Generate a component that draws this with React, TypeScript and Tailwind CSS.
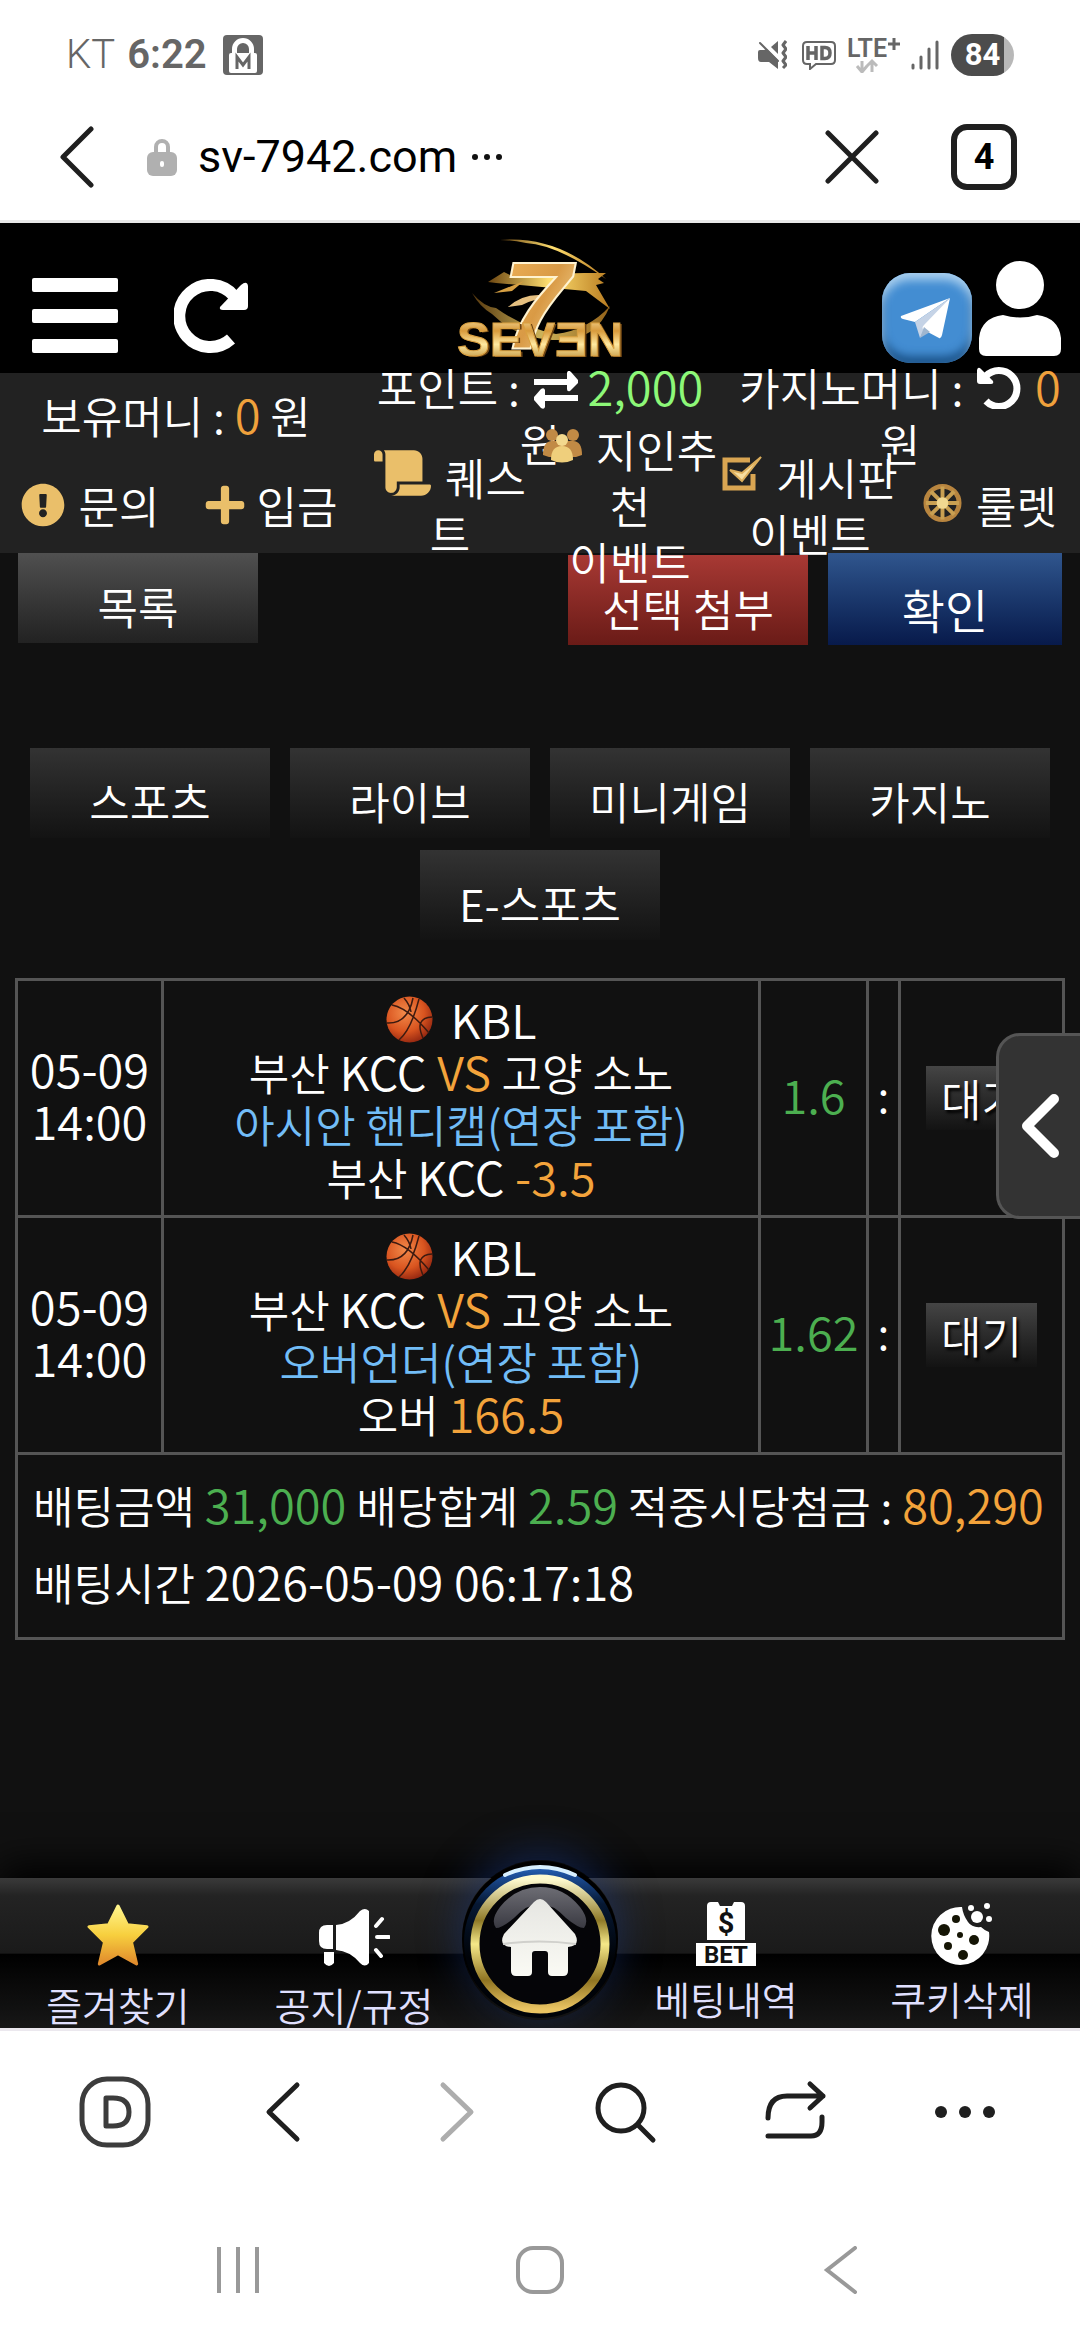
import type { ReactNode } from "react";
import { FaExclamationCircle, FaPlus, FaScroll } from "react-icons/fa";

const StatusBar = () => (
  <div className="flex h-[90px] items-end justify-between px-[66px] pb-[14px] text-[#666]">
    <div className="flex h-[42px] items-center">
      <span className="text-[40px] font-light">KT</span>
      <span className="ml-3 text-[40px] font-semibold">6:22</span>
      <svg className="ml-4" width="40" height="40" viewBox="0 0 40 40">
        <rect width="40" height="40" rx="4" fill="#666" />
        <path d="M11.500 20V14a8.500 8.500 0 0 1 17 0V20" fill="none" stroke="#fff" strokeWidth="5" />
        <rect x="6" y="18" width="28" height="20" rx="2" fill="#fff" />
        <path d="M14 34V22l6 8 6-8v12" fill="none" stroke="#666" strokeWidth="3" />
      </svg>
    </div>
    <div className="flex h-[42px] items-center">
      <svg width="30" height="30" viewBox="0 0 30 30" fill="none" stroke="#666">
        <path d="M1 12q0-2 2-2h4l3-1 11 11v9l-9-7H4q-3 0-3-4z" fill="#666" stroke="none" />
        <path d="M21 1v13l-7-7z" fill="#666" stroke="none" />
        <path d="M3 3l18 18" strokeWidth="2" strokeLinecap="round" />
        <path d="M29 1l-3 4 3 4-3 4 3 4-3 4 3 4-3 3" strokeWidth="3" strokeLinejoin="round" />
      </svg>
      <svg className="ml-[14px]" width="36" height="30" viewBox="0 0 36 30" fill="none" stroke="#666">
        <path d="M6 2h24q4 0 4 4v14q0 4-4 4H15l-6 5v-5H6q-4 0-4-4V6q0-4 4-4z" strokeWidth="2" />
        <path d="M7 6v14M15 6v14M7 13h8M21 7.500v11h3q5 0 5-5.500t-5-5.500z" strokeWidth="3.500" />
      </svg>
      <svg className="ml-[10px]" width="54" height="36" viewBox="0 0 54 36">
        <path d="M10 29l5 6 5-6M15 34V24M20 29l5-5 5 5M25 24v11" fill="none" stroke="#bbb" strokeWidth="3" />
        <text x="0" y="20" fontSize="25" fontWeight="600" fill="#666">LTE</text>
        <path d="M41 7h12M47 1v12" stroke="#666" strokeWidth="3" />
      </svg>
      <svg className="ml-[10px]" width="28" height="30" viewBox="0 0 28 30" stroke="#666" strokeWidth="3" strokeLinecap="round">
        <path d="M2 25v3M10 17v11M18 9v19M26 2v26" />
      </svg>
      <div className="ml-3 flex h-[42px] w-[63px] items-center justify-center rounded-full bg-linear-to-r from-[#4c4c4c] from-84% to-[#b8b8b8] to-84% text-[31px] font-bold text-white">
        84
      </div>
    </div>
  </div>
);

const AddressBar = () => (
  <div className="flex h-[133px] items-center border-b-3 border-[#e8e8e8] pt-[3px] pl-[58px] pr-[63px]">
    <button aria-label="뒤로">
      <svg width="36" height="64" viewBox="0 0 36 64" fill="none" stroke="#1f1f1f" strokeWidth="5" strokeLinecap="round" strokeLinejoin="round">
        <path d="M33 4L5 32l28 28" />
      </svg>
    </button>
    <svg className="ml-[53px]" width="30" height="38" viewBox="0 0 30 38">
      <path d="M9 16V9a6 6 0 0 1 12 0v7" fill="none" stroke="#b0b0b0" strokeWidth="4" />
      <rect y="14" width="30" height="24" rx="6" fill="#b0b0b0" />
      <rect x="13" y="23" width="4" height="6" rx="2" fill="#fff" />
    </svg>
    <span className="ml-[21px] text-[45px] text-black">sv-7942.com</span>
    <svg className="ml-[15px]" width="30" height="8" viewBox="0 0 30 8" fill="#111">
      <circle cx="3" cy="4" r="3" />
      <circle cx="15" cy="4" r="3" />
      <circle cx="27" cy="4" r="3" />
    </svg>
    <button className="ml-auto" aria-label="중지">
      <svg width="54" height="56" viewBox="0 0 54 56" stroke="#1f1f1f" strokeWidth="5" strokeLinecap="round">
        <path d="M3 4l48 48M51 4L3 52" />
      </svg>
    </button>
    <button className="ml-[72px] flex size-[66px] items-center justify-center rounded-2xl border-6 border-[#1f1f1f] text-[36px] font-bold text-black">
      4
    </button>
  </div>
);

const Logo = () => (
  <svg width="172" height="124" viewBox="0 0 172 124" role="img" aria-label="SEVEN">
    <defs>
      <linearGradient id="gold" x1="0" y1="0" x2="0" y2="1">
        <stop offset="0" stopColor="#fff3c0" />
        <stop offset="0.35" stopColor="#d89a3c" />
        <stop offset="0.6" stopColor="#ffe9a0" />
        <stop offset="1" stopColor="#a8731a" />
      </linearGradient>
      <linearGradient id="seven" x1="0" y1="0" x2="1" y2="1">
        <stop offset="0" stopColor="#f0b45a" />
        <stop offset="0.5" stopColor="#d99a45" />
        <stop offset="1" stopColor="#fff0b8" />
      </linearGradient>
      <linearGradient id="sweep" x1="0" y1="0" x2="1" y2="0">
        <stop offset="0" stopColor="#6b4510" />
        <stop offset="0.5" stopColor="#ffdf70" />
        <stop offset="1" stopColor="#b87b20" />
      </linearGradient>
    </defs>
    <path d="M46 3Q104-2 152 42Q104 8 72 6Q58 3 46 3z" fill="url(#sweep)" />
    <path d="M34 45l16-10 6 3 74-2 22 0-8 6 6 4-8 2 14 24-24-18-66-6-24-2z" fill="url(#sweep)" />
    <path d="M40 56l30-12-12 10z" fill="#d6a043" />
    <path d="M54 70q20-18 48-9-20-1-34 7z" fill="#e6c080" />
    <path d="M18 56q12 14 24 15 28 20 60 26 32-4 54-28-14 34-50 34-42 0-68-26Q26 70 18 56z" fill="url(#sweep)" opacity="0.8" />
    <text x="48" y="112" fontFamily="Liberation Sans" fontSize="124" fontWeight="700" fontStyle="italic" fill="url(#seven)" stroke="#fff3d0" strokeWidth="2">7</text>
    <text x="5" y="120" fontFamily="Liberation Sans" fontSize="49" fontWeight="700" fill="#6b4212">SEVƎN</text>
    <text x="3" y="119" fontFamily="Liberation Sans" fontSize="49" fontWeight="700" fill="url(#gold)" stroke="#d9a040" strokeWidth="1">SEVƎN</text>
  </svg>
);

const SiteHeader = () => (
  <header className="flex h-[150px] items-end bg-black px-8 text-white">
    <div className="flex flex-1 items-end pb-[20px]">
      <button aria-label="메뉴" className="flex h-[75px] w-[86px] flex-col justify-between">
        <span className="h-[14px] w-full rounded-xs bg-white" />
        <span className="h-[14px] w-full rounded-xs bg-white" />
        <span className="h-[14px] w-full rounded-xs bg-white" />
      </button>
      <button aria-label="새로고침" className="ml-[56px]">
        <svg width="74" height="74" viewBox="0 0 74 74">
          <path d="M57 60A31 31 0 1 1 60 17" fill="none" stroke="#fff" strokeWidth="12" />
          <path d="M49 31q-4 0-3-3l21-22q6-5 7 1v20q0 4-4 4z" fill="#fff" />
        </svg>
      </button>
    </div>
    <a href="#" className="pb-[12px]"><Logo /></a>
    <div className="flex flex-1 items-end justify-end pb-[10px]">
      <a href="#" aria-label="텔레그램" className="mr-[7px] flex size-[90px] rounded-[28px] bg-[#438dd2] shadow-[inset_0_7px_10px_#a9cfee,inset_0_-7px_9px_#1d558c]">
        <svg width="90" height="90" viewBox="0 0 90 90">
          <path d="M19 43q-1 2 2 3l12 3L68 25z" fill="#fff" />
          <path d="M33 49l5 16 6-12 24-28z" fill="#c5d3e6" />
          <path d="M68 25L42 52q-3 3 0 5l15 8q2 1 3-3z" fill="#fff" />
          <path d="M38 65l4-11 6 5z" fill="#9fb6cf" />
        </svg>
      </a>
      <button aria-label="내 정보" className="-mr-[13px] pb-[7px]">
        <svg width="82" height="95" viewBox="0 0 82 95" fill="#fff">
          <circle cx="41" cy="24" r="24" />
          <path d="M0 88V77Q2 57 24 54q17 5 34 0 22 3 24 23v11q0 7-7 7H7q-7 0-7-7z" />
        </svg>
      </button>
    </div>
  </header>
);

const SwapIcon = () => (
  <svg className="ml-1 inline-block align-[-3px]" width="44" height="38" viewBox="0 0 44 38" fill="#fff">
    <path d="M0 8h33V2q1-4 4-1l7 8q1 2 0 3l-8 8q-3 1-3-2v-4H0zM44 24v6H11v6q-1 3-4 1l-7-8q-1-2 0-3l7-8q3-2 4 1v5z" />
  </svg>
);

const UndoIcon = () => (
  <svg className="mx-1 inline-block align-[-3px]" width="44" height="44" viewBox="0 0 44 44">
    <path d="M9 36A18 18 0 1 0 9 11" fill="none" stroke="#fff" strokeWidth="7" />
    <path d="M0 5q1-4 4-1l12 12q1 3-2 3H3q-3 0-3-3z" fill="#fff" />
  </svg>
);

const FriendsIcon = () => (
  <svg className="mr-[14px] inline-block align-[5px]" width="39" height="34" viewBox="0 0 39 34">
    <g fill="#c18a45">
      <circle cx="9" cy="6" r="6" />
      <circle cx="30" cy="6" r="6" />
      <path d="M0 26q0-14 9-14h21q9 0 9 14l-6 2H6z" />
    </g>
    <circle cx="19" cy="11" r="6" fill="#f3d98e" />
    <path d="M8 31q0-14 11-14t11 14q-11 5-22 0z" fill="#efcf7c" />
  </svg>
);

const CheckIcon = () => (
  <svg className="mr-[14px] inline-block align-[4px]" width="40" height="36" viewBox="0 0 40 36" fill="none">
    <path d="M28 4H3v28h28V18" stroke="#d9a552" strokeWidth="5" />
    <path d="M8 14l12 11L39 1 20 17z" fill="#f6dda0" stroke="#dcae5c" strokeWidth="2" />
  </svg>
);

const WheelIcon = () => (
  <svg className="mr-[14px] inline-block align-[1px]" width="39" height="40" viewBox="0 0 40 40" fill="none" stroke="#c9a052">
    <circle cx="20" cy="20" r="17" strokeWidth="5" stroke="#b8853f" />
    <path d="M20 3v34M3 20h34M8 8l24 24M32 8L8 32" strokeWidth="4" />
    <circle cx="20" cy="20" r="6" fill="#f0d890" stroke="none" />
  </svg>
);

const InfoBar = () => (
  <section className="relative z-10 bg-[#222] text-[44px] leading-[56px] whitespace-nowrap text-white">
    <div className="grid h-[90px] grid-cols-3 text-center">
      <div className="flex h-[90px] items-center justify-center pr-2 pb-2">
        <p>보유머니 : <span className="text-[47px] text-[#f0a13c]">0</span> 원</p>
      </div>
      <div className="flex h-[90px] items-center justify-center pb-2">
        <p>
          포인트 : <SwapIcon /> <span className="text-[47px] text-[#8df878]">2,000</span>
          <br />원
        </p>
      </div>
      <div className="flex h-[90px] items-center justify-center pb-2">
        <p>
          카지노머니 : <UndoIcon /> <span className="text-[47px] text-[#f0a13c]">0</span>
          <br />원
        </p>
      </div>
    </div>
    <nav className="grid h-[90px] grid-cols-6 text-center">
      <a href="#" className="flex h-[90px] items-center justify-center pb-1.5">
        <FaExclamationCircle className="mr-[14px] text-[#eabf6a]" />문의
      </a>
      <a href="#" className="flex h-[90px] items-center justify-center pb-1.5">
        <FaPlus className="mr-[10px] text-[#eabf6a]" />입금
      </a>
      <a href="#" className="flex h-[90px] items-center justify-center pb-1.5">
        <span>
          <FaScroll className="mr-[14px] inline-block h-[46px] w-[57px] align-[0px] text-[#eabf6a]" />퀘스
          <br />트
        </span>
      </a>
      <a href="#" className="flex h-[90px] items-center justify-center pb-1.5">
        <span>
          <FriendsIcon />지인추
          <br />천
          <br />이벤트
        </span>
      </a>
      <a href="#" className="flex h-[90px] items-center justify-center pb-1.5">
        <span>
          <CheckIcon />게시판
          <br />이벤트
        </span>
      </a>
      <a href="#" className="flex h-[90px] items-center justify-center pb-1.5">
        <span><WheelIcon />룰렛</span>
      </a>
    </nav>
  </section>
);

const tabs = ["스포츠", "라이브", "미니게임", "카지노", "E-스포츠"];

const bets = [
  { day: "05-09", time: "14:00", market: "아시안 핸디캡(연장 포함)", team: "부산", club: "KCC", line: "-3.5", odds: "1.6" },
  { day: "05-09", time: "14:00", market: "오버언더(연장 포함)", team: "오버", club: "", line: "166.5", odds: "1.62" },
];

const Basketball = () => (
  <svg className="mr-[18px]" width="47" height="47" viewBox="0 0 47 47">
    <defs>
      <radialGradient id="ball" cx="0.4" cy="0.35" r="0.7">
        <stop offset="0" stopColor="#f28a4a" />
        <stop offset="0.6" stopColor="#d9541f" />
        <stop offset="1" stopColor="#8f2410" />
      </radialGradient>
    </defs>
    <circle cx="23.500" cy="23.500" r="23" fill="url(#ball)" />
    <path d="M1 27Q22 28 27 2M6 9q16 3 37 28M13 44q12-10 20-41M37 42Q28 22 46 21M18 2q6 7 7 14" fill="none" stroke="#3c1a10" strokeWidth="1.500" />
  </svg>
);

const BetTable = () => (
  <table className="w-full border-collapse text-[44px] leading-[52px] text-white">
    <tbody>
      {bets.map((bet) => (
        <tr key={bet.market} className="h-[237px] text-center">
          <td className="w-[146px] border-3 border-[#555] pb-2 text-[47px]">
            {bet.day}
            <br />
            {bet.time}
          </td>
          <td className="border-3 border-[#555]">
            <div className="flex items-center justify-center text-[47px]">
              <Basketball />
              KBL
            </div>
            <div>
              부산 <span className="text-[47px]">KCC <span className="text-[#f3a33b]">VS</span> </span>고양 소노
            </div>
            <div className="text-[#72bdf7]">{bet.market}</div>
            <div>
              {bet.team} <span className="text-[47px]">{bet.club} <span className="text-[#f3a33b]">{bet.line}</span></span>
            </div>
          </td>
          <td className="w-[108px] border-3 border-[#555] pb-2 text-[47px] text-[#4caf50]">{bet.odds}</td>
          <td className="w-[32px] border-3 border-[#555] pb-2">:</td>
          <td className="w-[164px] border-3 border-[#555]">
            <span className="inline-block bg-linear-to-b from-[#454545] to-[#131313] px-[15px] py-[6px] text-shadow-[2px_3px_3px_#000]">대기</span>
          </td>
        </tr>
      ))}
      <tr>
        <td colSpan={5} className="border-3 border-[#555] px-[15px] pt-[11px] pb-[17px] leading-[75px] whitespace-nowrap">
          <div>
            배팅금액 <span className="text-[47px] text-[#4caf50]">31,000</span> 배당합계 <span className="text-[47px] text-[#4caf50]">2.59</span> 적중시당첨금 : <span className="text-[47px] text-[#f3a33b]">80,290</span>
          </div>
          <div>
            배팅시간 <span className="text-[47px]">2026-05-09 06:17:18</span>
          </div>
        </td>
      </tr>
    </tbody>
  </table>
);

const Main = () => (
  <main className="relative flex-1">
    <div className="flex items-start px-[18px] text-[44px] text-white">
      <button className="h-[90px] w-[240px] bg-linear-to-b from-[#505050] to-[#222] pt-4">목록</button>
      <button className="mt-[2px] ml-auto h-[90px] w-[240px] bg-linear-to-b from-[#a83934] to-[#6a1b17] pt-4">선택 첨부</button>
      <button className="ml-5 h-[92px] w-[234px] bg-linear-to-b from-[#30568e] to-[#081a4b] pt-5 text-[47px]">확인</button>
    </div>
    <div className="mt-[103px] flex flex-wrap justify-center gap-x-5 gap-y-3 px-[15px] text-[44px] text-white">
      {tabs.map((tab) => (
        <button key={tab} className="h-[90px] w-[240px] bg-linear-to-b from-[#333] to-[#131313] pt-4">
          {tab}
        </button>
      ))}
    </div>
    <div className="mt-[38px] px-[15px]">
      <BetTable />
    </div>
    <button aria-label="열기" className="absolute top-[480px] right-0 flex h-[186px] w-[84px] items-center justify-center rounded-l-3xl border-3 border-r-0 border-[#555] bg-[#333]">
      <svg width="40" height="66" viewBox="0 0 40 66" fill="none" stroke="#fff" strokeWidth="10" strokeLinecap="round" strokeLinejoin="round">
        <path d="M34 6L7 33l27 27" />
      </svg>
    </button>
  </main>
);

const NavItem = ({ label, low, children }: { label: string; low?: boolean; children: ReactNode }) => (
  <a href="#" className="flex flex-1 flex-col items-center pt-[22px]">
    <span className="flex h-[66px] shrink-0 items-end">{children}</span>
    <span className={low ? "mt-3 leading-[52px]" : "mt-1.5 leading-[52px]"}>{label}</span>
  </a>
);

const HomeButton = () => (
  <svg width="156" height="160" viewBox="0 0 156 160">
    <defs>
      <linearGradient id="ring" x1="0" y1="0" x2="0" y2="1">
        <stop offset="0" stopColor="#fffbd0" />
        <stop offset="0.32" stopColor="#8f7a28" />
        <stop offset="0.5" stopColor="#f5e888" />
        <stop offset="0.78" stopColor="#8f7422" />
        <stop offset="1" stopColor="#eac462" />
      </linearGradient>
      <linearGradient id="rim" x1="0" y1="0" x2="0" y2="1">
        <stop offset="0" stopColor="#2a66b8" />
        <stop offset="0.06" stopColor="#1d4f9a" />
        <stop offset="0.25" stopColor="#061833" />
        <stop offset="0.6" stopColor="#000308" />
      </linearGradient>
      <linearGradient id="gloss" x1="0" y1="0" x2="0" y2="1">
        <stop offset="0" stopColor="#6d6d74" />
        <stop offset="1" stopColor="#3a3a42" />
      </linearGradient>
      <linearGradient id="house" x1="0" y1="0" x2="0" y2="1">
        <stop offset="0" stopColor="#e6e6e2" />
        <stop offset="1" stopColor="#fafaf4" />
      </linearGradient>
    </defs>
    <circle cx="78" cy="79" r="78" fill="#000" />
    <circle cx="78" cy="82" r="76" fill="url(#rim)" />
    <path d="M43 15Q78-1 113 15" fill="none" stroke="#d8f0ff" strokeWidth="4" strokeLinecap="round" />
    <circle cx="78" cy="84" r="65" fill="#050508" stroke="url(#ring)" strokeWidth="9" />
    <path d="M34 68Q28 60 38 47Q54 27 78 27T118 47Q128 60 122 68Q116 68 104 58Q78 30 52 58Q40 68 34 68z" fill="url(#gloss)" />
    <path d="M78 39q3 0 6 3l29 32q6 12-7 13v24q0 5-5 5H90q-4 0-4-4V94q0-3-3-3H73q-3 0-3 3v18q0 4-4 4H54q-5 0-5-5V87q-13-1-7-13l30-32q3-3 6-3z" fill="url(#house)" />
    <path d="M41 84q36-5 73 0" fill="none" stroke="#d0d0cc" strokeWidth="2" />
  </svg>
);

const SiteNav = () => (
  <nav className="relative flex h-[150px] bg-[linear-gradient(#3a3a3a_0%,#232323_12%,#1a1a1a_50%,#000_51%,#171717_100%)] text-[39px] whitespace-nowrap text-[#e0e0ff] shadow-[0_-12px_36px_#000]">
    <NavItem label="즐겨찾기" low>
      <svg width="62" height="62" viewBox="1 -1 60 60">
        <defs>
          <linearGradient id="star" x1="0" y1="0" x2="0" y2="1">
            <stop offset="0" stopColor="#fff58c" />
            <stop offset="0.5" stopColor="#f7cf3e" />
            <stop offset="1" stopColor="#e08a2c" />
          </linearGradient>
        </defs>
        <path d="M31 1l9 18 19 2-15 15 5 21-18-10-18 10 5-21L3 21l19-2z" fill="url(#star)" stroke="url(#star)" strokeWidth="3" strokeLinejoin="round" />
      </svg>
    </NavItem>
    <NavItem label="공지/규정" low>
      <svg width="72" height="58" viewBox="0 2 72 58" fill="#fff">
        <path d="M15 19v24H9q-8 0-8-8v-8q0-8 8-8zM18 19q14-1 24-14 5-4 9 0v52q-4 5-9 0-10-12-24-13zM6 46h10v11q-5 6-10 0z" />
        <path d="M58 20l6-7M59 31h12M58 44l5 6" stroke="#fff" strokeWidth="4" strokeLinecap="round" />
      </svg>
    </NavItem>
    <div className="w-[136px]">
      <button aria-label="홈" className="absolute -top-[18px] left-1/2 -translate-x-1/2 rounded-full shadow-[0_-8px_40px_#1c3c8a80]">
        <HomeButton />
      </button>
    </div>
    <NavItem label="베팅내역">
      <svg width="62" height="66" viewBox="0 0 62 66">
        <path d="M12 40V6q0-4 4-4h7l2 4h12l2-4h7q4 0 4 4v34z" fill="#fff" />
        <text x="31" y="33" textAnchor="middle" fontFamily="Roboto" fontSize="29" fontWeight="700" fill="#111">$</text>
        <rect x="1" y="43" width="60" height="23" fill="#fff" />
        <text x="31" y="63" textAnchor="middle" fontFamily="Roboto" fontSize="24" fontWeight="700" fill="#111">BET</text>
      </svg>
    </NavItem>
    <NavItem label="쿠키삭제">
      <svg width="62" height="64" viewBox="0 0 62 64" fill="#fff">
        <path d="M31 5A29 29 0 1 0 58 30q-5-2-8-5-9 1-13-5-5-7-6-15z" />
        <circle cx="46" cy="15" r="6" />
        <circle cx="40" cy="6" r="3" />
        <circle cx="56" cy="4" r="3" />
        <circle cx="58" cy="17" r="3" />
        <g fill="#151505">
          <circle cx="25" cy="17" r="4" />
          <circle cx="13" cy="28" r="6" />
          <circle cx="29" cy="33" r="3" />
          <circle cx="43" cy="38" r="5" />
          <circle cx="17" cy="44" r="4" />
          <circle cx="32" cy="53" r="5" />
        </g>
      </svg>
    </NavItem>
  </nav>
);

const ToolButton = ({ label, children, color = "#1f1f1f" }: { label: string; children: ReactNode; color?: string }) => (
  <button aria-label={label}>
    <svg width="72" height="72" viewBox="0 0 72 72" fill="none" stroke={color} strokeWidth="5" strokeLinecap="round" strokeLinejoin="round">
      {children}
    </svg>
  </button>
);

const BrowserBar = () => (
  <footer className="relative border-t-3 border-[#ebe8ee] bg-white">
    <div className="flex h-[162px] items-center justify-between px-[79px]">
      <ToolButton label="대시보드" color="#3c3c3c">
        <rect x="3" y="3" width="66" height="66" rx="25" />
        <path d="M27 22v28h7q16 0 16-14T34 22z" />
      </ToolButton>
      <ToolButton label="이전">
        <path d="M48 9L20 36l28 27" />
      </ToolButton>
      <ToolButton label="다음" color="#adadad">
        <path d="M24 9l28 27-28 27" />
      </ToolButton>
      <ToolButton label="검색">
        <circle cx="32" cy="32" r="23" />
        <path d="M49 49l15 15" />
      </ToolButton>
      <ToolButton label="공유">
        <path d="M9 42q0-22 19-22h36M51 8l13 12-13 12M63 41v5q0 14-11 14H9" />
      </ToolButton>
      <ToolButton label="더보기">
        <g fill="#1f1f1f" stroke="none">
          <circle cx="12" cy="36" r="6" />
          <circle cx="36" cy="36" r="6" />
          <circle cx="60" cy="36" r="6" />
        </g>
      </ToolButton>
    </div>
    <div className="flex h-[147px] items-start px-[88px] pt-[53px]">
      <button className="flex flex-1 justify-center" aria-label="최근 앱">
        <svg width="48" height="48" viewBox="0 0 48 48" stroke="#999" strokeWidth="4">
          <path d="M4 1v46M23 1v46M42 1v46" />
        </svg>
      </button>
      <button className="flex flex-1 justify-center" aria-label="홈 화면">
        <svg width="48" height="48" viewBox="0 0 48 48" fill="none" stroke="#999" strokeWidth="4">
          <rect x="2" y="2" width="44" height="44" rx="15" />
        </svg>
      </button>
      <button className="flex flex-1 justify-center" aria-label="뒤로 가기">
        <svg width="48" height="48" viewBox="0 0 48 48" fill="none" stroke="#999" strokeWidth="4" strokeLinecap="round">
          <path d="M38 2L10 24l28 22" />
        </svg>
      </button>
    </div>
  </footer>
);

const App = () => (
  <div className="flex min-h-screen flex-col bg-[#111] font-['Noto_Sans_CJK_KR',sans-serif] font-[350]">
    <div className="bg-white font-[Roboto,sans-serif] font-normal">
      <StatusBar />
      <AddressBar />
    </div>
    <SiteHeader />
    <InfoBar />
    <Main />
    <SiteNav />
    <BrowserBar />
  </div>
);

export default App;
